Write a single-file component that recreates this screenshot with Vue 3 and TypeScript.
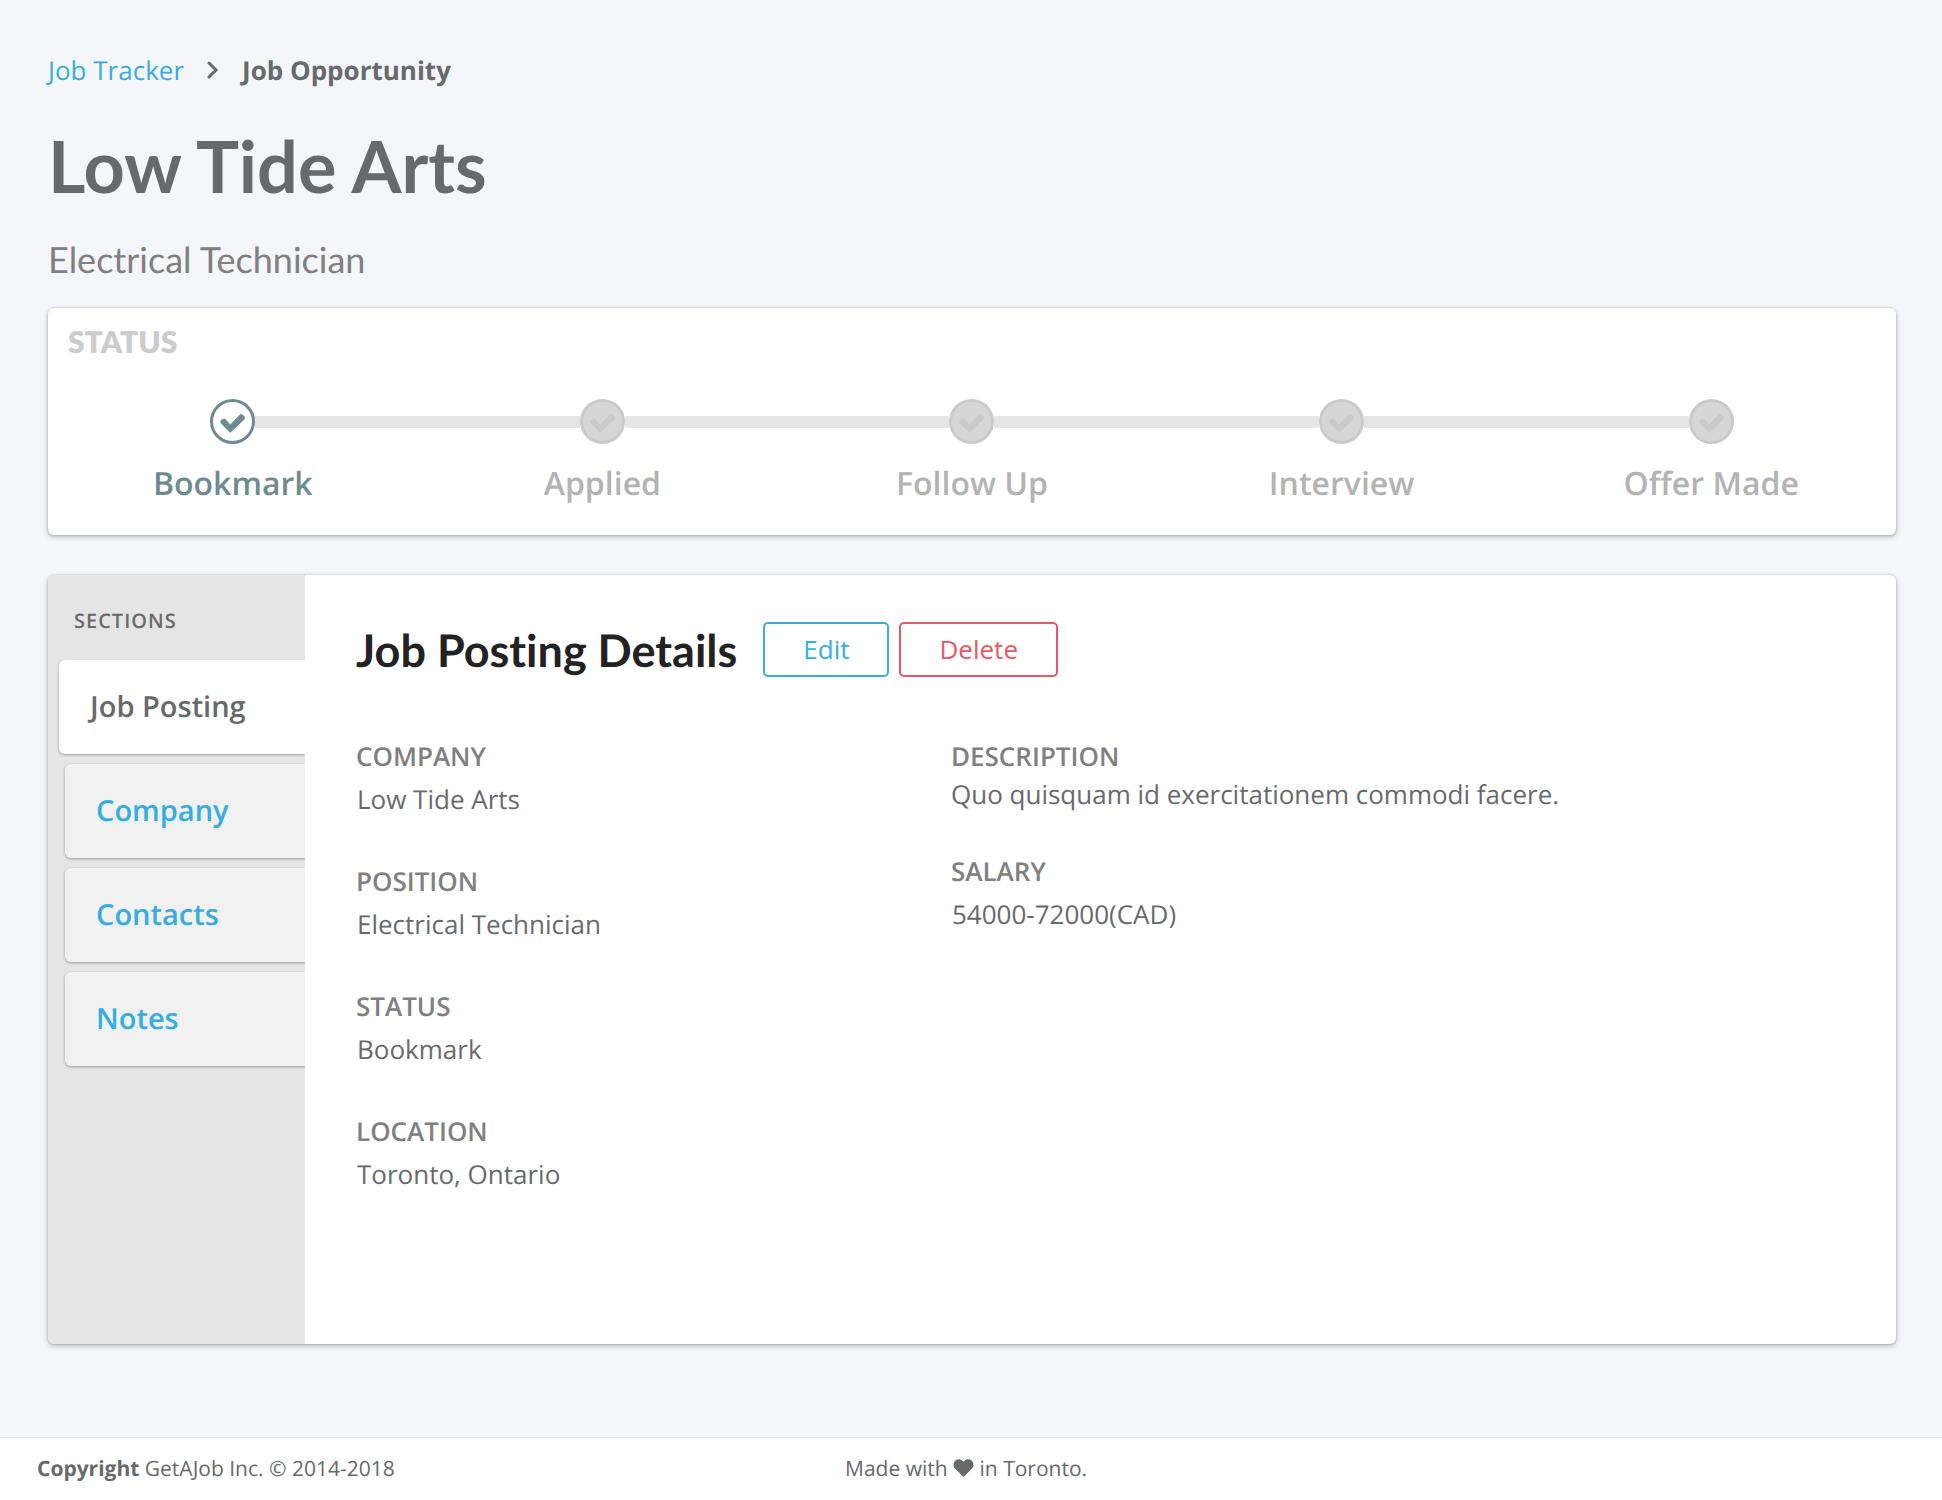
<script setup lang="ts">
interface Step {
  label: string
  active: boolean
}
interface Section {
  label: string
  href: string
}
interface Field {
  label: string
  value: string
  prose?: boolean
}

const steps: Step[] = [
  { label: 'Bookmark', active: true },
  { label: 'Applied', active: false },
  { label: 'Follow Up', active: false },
  { label: 'Interview', active: false },
  { label: 'Offer Made', active: false },
]

const sections: Section[] = [
  { label: 'Job Posting', href: '#job-posting' },
  { label: 'Company', href: '#company' },
  { label: 'Contacts', href: '#contacts' },
  { label: 'Notes', href: '#notes' },
]
const current = 'Job Posting'

const columns: Field[][] = [
  [
    { label: 'Company', value: 'Low Tide Arts' },
    { label: 'Position', value: 'Electrical Technician' },
    { label: 'Status', value: 'Bookmark' },
    { label: 'Location', value: 'Toronto, Ontario' },
  ],
  [
    { label: 'Description', value: 'Quo quisquam id exercitationem commodi facere.', prose: true },
    { label: 'Salary', value: '54000-72000(CAD)' },
  ],
]
</script>

<template>
  <div class="page">
    <main class="content">
      <nav class="breadcrumb" aria-label="Breadcrumb">
        <a href="#tracker">Job Tracker</a>
        <svg class="chevron" viewBox="0 0 12 18" aria-hidden="true">
          <path d="M2 2 9 9 2 16" />
        </svg>
        <strong>Job Opportunity</strong>
      </nav>

      <h1 class="title">Low Tide Arts</h1>
      <p class="subtitle">Electrical Technician</p>

      <section class="panel status">
        <h2 class="status-heading">STATUS</h2>
        <ol class="steps">
          <li v-for="step in steps" :key="step.label" class="step" :class="{ active: step.active }">
            <div class="track">
              <span class="node">
                <svg viewBox="60 69 80 64" aria-hidden="true">
                  <path d="M64 100Q61 96 64 92L70 87Q75 84 79 88L93 104 122 74Q127 70 131 74L136 79Q140 83 137 88L95 128Q93 130 91 128Z" />
                </svg>
              </span>
            </div>
            <span class="step-label">{{ step.label }}</span>
          </li>
        </ol>
      </section>

      <section class="panel record">
        <aside class="sidebar">
          <h2 class="sidebar-heading">SECTIONS</h2>
          <nav class="tabs" aria-label="Sections">
            <a
              v-for="section in sections"
              :key="section.label"
              class="tab"
              :class="{ current: section.label === current }"
              :href="section.href"
            >{{ section.label }}</a>
          </nav>
        </aside>

        <div class="details">
          <header class="details-header">
            <h2 class="details-title">Job Posting Details</h2>
            <button type="button" class="button edit">Edit</button>
            <button type="button" class="button delete">Delete</button>
          </header>
          <div class="columns">
            <dl v-for="(fields, i) in columns" :key="i" class="fields">
              <div v-for="field in fields" :key="field.label" class="field" :class="{ prose: field.prose }">
                <dt>{{ field.label }}</dt>
                <dd>{{ field.value }}</dd>
              </div>
            </dl>
          </div>
        </div>
      </section>
    </main>

    <footer class="footer">
      <span><strong>Copyright</strong> GetAJob Inc. © 2014-2018</span>
      <span class="made">Made with
        <svg class="heart" viewBox="0 0 512 460" aria-label="love">
          <path d="M462 36C408-10 326-2 276 50L256 70 236 50C186-2 104-10 50 36-13 90-16 186 40 244L233 443C246 456 266 456 279 443L472 244C528 186 525 90 462 36Z" />
        </svg>
        in Toronto.</span>
    </footer>
  </div>
</template>

<style>
body {
  margin: 0;
  background: #f4f6fa;
}
</style>

<style scoped>
.page {
  display: flex;
  flex-direction: column;
  min-height: 100vh;
  box-sizing: border-box;
  font-family: "Open Sans", "Noto Sans", sans-serif;
  font-size: 26px;
  line-height: 36px;
  font-variant-ligatures: none;
  text-rendering: geometricPrecision;
  color: #676a6c;
}
h1, h2, p, ol, dl, dd {
  margin: 0;
  padding: 0;
}
a {
  color: #36ade0;
  text-decoration: none;
}
.content {
  flex: 1;
  padding: 52px 46px 92px 48px;
}
.breadcrumb {
  display: flex;
  align-items: center;
}
.chevron {
  width: 12px;
  height: 18px;
  margin: 0 23px;
  fill: none;
  stroke: #676a6c;
  stroke-width: 3;
  stroke-linecap: round;
}
.title {
  margin-top: 38px;
  font-family: Lato, sans-serif;
  font-size: 72px;
  line-height: 80px;
  font-weight: 700;
}
.subtitle {
  margin: 31px 0 27px;
  font-family: Lato, sans-serif;
  font-size: 36px;
  line-height: 44px;
  color: #808080;
}
.panel {
  background: #fff;
  border-radius: 6px;
  box-shadow: 0 0 2px rgba(0, 0, 0, 0.24), 0 2px 5px rgba(0, 0, 0, 0.26);
}
.status {
  padding: 16px 0 29px;
}
.status-heading {
  padding-left: 20px;
  font-family: Lato, sans-serif;
  font-size: 30px;
  line-height: 36px;
  font-weight: 800;
  color: #ccc;
}
.steps {
  display: flex;
  margin-top: 39px;
  list-style: none;
}
.step {
  flex: 1;
  text-align: center;
  color: #b3b3b3;
}
.track {
  display: flex;
  align-items: center;
}
.track::before,
.track::after {
  content: "";
  flex: 1;
  height: 12px;
  background: #e5e5e5;
}
.step:first-child .track::before,
.step:last-child .track::after {
  background: none;
}
.node {
  display: flex;
  align-items: center;
  justify-content: center;
  width: 39px;
  height: 39px;
  border: 3px solid #cacaca;
  border-radius: 50%;
  background: #d6d6d6;
}
.node svg {
  width: 27px;
  height: 21px;
  margin-top: 3px;
  fill: #cacaca;
}
.active {
  color: #6f8b92;
}
.active .node {
  border-color: #6f8b92;
  background: #fff;
}
.active .node svg {
  fill: #6f8b92;
}
.step-label {
  display: block;
  margin-top: 18px;
  font-size: 32px;
  line-height: 44px;
  font-weight: 600;
}
.record {
  display: flex;
  min-height: 769px;
  margin-top: 40px;
  overflow: hidden;
}
.sidebar {
  flex: 0 0 257px;
  padding-top: 32px;
  box-sizing: border-box;
  background: #e5e5e5;
}
.sidebar-heading {
  padding-left: 26px;
  font-size: 20px;
  line-height: 28px;
  font-weight: 600;
  letter-spacing: 1px;
}
.tabs {
  display: flex;
  flex-direction: column;
  gap: 10px;
  margin-top: 25px;
  overflow: hidden;
  padding-bottom: 4px;
}
.tab {
  margin-left: 17px;
  padding: 29px 31px;
  border-radius: 6px 0 0 6px;
  background: #f1f1f1;
  box-shadow: 0 1px 3px rgba(0, 0, 0, 0.32);
  font-size: 29px;
  font-weight: 600;
}
.tab.current {
  margin-left: 11px;
  background: #fff;
  color: #676a6c;
}
.details {
  flex: 1;
  padding: 47px 51px;
}
.details-header {
  display: flex;
  align-items: center;
}
.details-title {
  margin-right: 26px;
  font-family: Lato, sans-serif;
  font-size: 45px;
  line-height: 52px;
  font-weight: 700;
  color: #222;
}
.button {
  height: 55px;
  padding: 0 38px 1px;
  border: 2px solid #36ade0;
  border-radius: 5px;
  background: #fff;
  font: inherit;
  color: #36ade0;
}
.button.delete {
  margin-left: 10px;
  border-color: #ed5565;
  color: #ed5565;
}
.columns {
  display: grid;
  grid-template-columns: 595px 1fr;
  margin-top: 61px;
}
.field {
  margin-bottom: 46px;
}
.field dt {
  font-weight: 600;
  color: #808080;
  text-transform: uppercase;
}
.field dd {
  margin: 7px 0 0 1px;
}
.field.prose {
  margin-bottom: 41px;
}
.field.prose dd {
  margin: 2px 0 0;
}
.footer {
  display: grid;
  grid-template-columns: 808px 1fr;
  padding: 17px 37px;
  border-top: 1px solid #e7eaec;
  background: #fff;
  font-size: 21px;
  line-height: 28px;
}
.heart {
  width: 21px;
  height: 18px;
  vertical-align: -1px;
  fill: #676a6c;
}
</style>
